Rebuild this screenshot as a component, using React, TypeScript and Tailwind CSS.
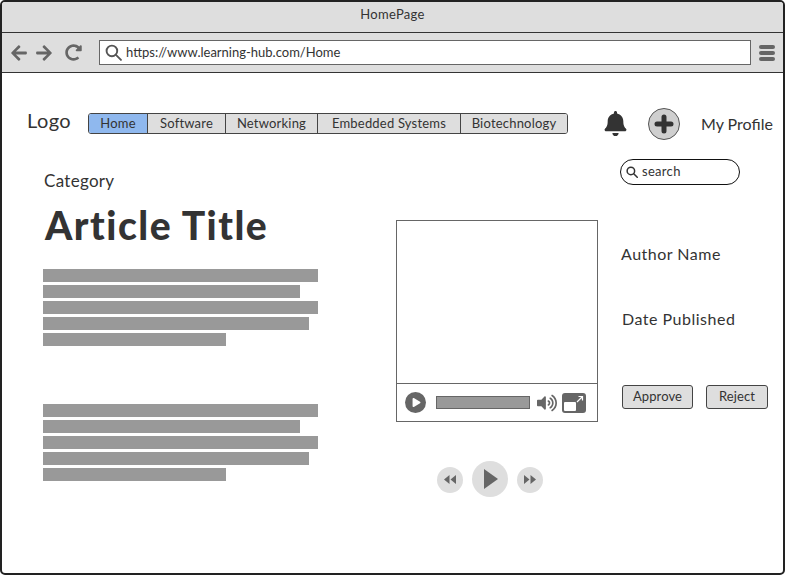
import React from 'react';
import { FaArrowLeft, FaArrowRight, FaBell, FaPlay, FaRedoAlt, FaVolumeUp } from 'react-icons/fa';

const tabs = [
  { label: 'Home', width: 'w-[58px]', active: true },
  { label: 'Software', width: 'w-[78px]', active: false },
  { label: 'Networking', width: 'w-[92px]', active: false },
  { label: 'Embedded Systems', width: 'w-[143px]', active: false },
  { label: 'Biotechnology', width: 'w-[107px]', active: false },
];

const TextBlock = () => (
  <div className="flex flex-col gap-[3px]">
    <div className="h-[13px] w-[275px] bg-[#999999]" />
    <div className="h-[13px] w-[257px] bg-[#999999]" />
    <div className="h-[13px] w-[275px] bg-[#999999]" />
    <div className="h-[13px] w-[266px] bg-[#999999]" />
    <div className="h-[13px] w-[183px] bg-[#999999]" />
  </div>
);

const SearchGlass = ({ size, width, color }: { size: number; width: number; color: string }) => (
  <svg width={size} height={size} viewBox="0 0 16 16" fill="none" stroke={color} strokeWidth={width} strokeLinecap="round">
    <circle cx="6.5" cy="6.5" r="5" />
    <path d="M10.3 10.3 15 15" />
  </svg>
);

export default function App() {
  return (
    <div className="w-[785px] h-[575px] bg-white border-2 border-[#222] rounded-[5px] overflow-hidden flex flex-col text-[#333] font-['Lato',sans-serif]">
      <div className="h-[31px] shrink-0 bg-[#dedede] border-b border-[#333] flex items-center justify-center pb-[5px] text-[13px] tracking-[0.3px]">HomePage</div>
      <div className="h-[40px] shrink-0 bg-[#dedede] border-b border-[#333] flex items-center pl-[8px]">
        <FaArrowLeft size={18} color="#666" />
        <FaArrowRight size={18} color="#666" className="ml-[7px]" />
        <FaRedoAlt size={17} color="#666" className="ml-[12px]" />
        <div className="ml-[17px] w-[652px] h-[25px] bg-white border border-[#666] flex items-center pl-[5px] text-[13px]">
          <SearchGlass size={17} width={1.8} color="#555" />
          <span className="ml-[4px] pt-[1px]">https://www.learning-hub.com/Home</span>
        </div>
        <div className="ml-[8px] w-[16px] flex flex-col gap-[2px]">
          <div className="h-[4px] rounded-full bg-[#666]" />
          <div className="h-[4px] rounded-full bg-[#666]" />
          <div className="h-[4px] rounded-full bg-[#666]" />
        </div>
      </div>

      <div className="mt-[34px] h-[32px] shrink-0 flex items-center pl-[25px]">
        <div className="w-[61px] pb-[6px] text-[20px] tracking-[0.4px]">Logo</div>
        <div className="w-[480px] h-[21px] flex border border-[#444] rounded-[3px] overflow-hidden text-[13px] tracking-[0.2px]">
          {tabs.map((t, i) => (
            <div key={t.label} className={`${t.width} shrink-0 pt-[1px] flex items-center justify-center ${i > 0 ? 'border-l border-[#444]' : ''} ${t.active ? 'bg-[#8fb8ee]' : 'bg-[#dedede]'}`}>{t.label}</div>
          ))}
        </div>
        <FaBell size={25} color="#333" className="ml-[35px] mt-[1px]" />
        <div className="ml-[20px] mt-[1px] w-[32px] h-[32px] rounded-full bg-[#cfcfcf] border border-[#555] flex items-center justify-center">
          <svg width="20" height="20" viewBox="0 0 20 20" stroke="#333" strokeWidth="5" strokeLinecap="round">
            <path d="M10 3v14M3 10h14" />
          </svg>
        </div>
        <div className="ml-[21px] pt-[1px] text-[16px] whitespace-nowrap">My Profile</div>
      </div>

      <div className="mt-[20px] flex pl-[41px]">
        <div className="w-[275px] flex flex-col">
          <div className="mt-[11px] h-[22px] flex items-center text-[17px] tracking-[0.3px] pl-[1px]">Category</div>
          <div className="mt-[10px] h-[46px] flex items-center text-[39px] font-black tracking-[1.5px] whitespace-nowrap pl-[2px]">Article Title</div>
          <div className="mt-[21px]"><TextBlock /></div>
          <div className="mt-[58px]"><TextBlock /></div>
        </div>

        <div className="ml-[78px] w-[202px] mt-[61px] flex flex-col">
          <div className="h-[202px] border border-[#666] flex flex-col">
            <div className="flex-1" />
            <div className="h-[38px] border-t border-[#666] flex items-center pl-[8px]">
              <div className="w-[21px] h-[21px] rounded-full bg-[#666] flex items-center justify-center">
                <FaPlay size={9} color="white" className="ml-[1px]" />
              </div>
              <div className="ml-[10px] w-[94px] h-[13px] bg-[#999] border border-[#666]" />
              <FaVolumeUp size={20} color="#666" className="ml-[7px]" />
              <svg width="24" height="20" viewBox="0 0 24 20" className="ml-[5px]">
                <rect width="24" height="20" rx="3" fill="#666" />
                <rect x="2" y="9" width="12" height="9" rx="1" fill="white" />
                <path d="M15 9l5-5M16.5 3.5H20.5V7.5" stroke="white" strokeWidth="1.2" fill="none" />
              </svg>
            </div>
          </div>
          <div className="mt-[39px] ml-[41px] flex items-center gap-[9px]">
            <div className="w-[26px] h-[26px] mt-[1px] rounded-full bg-[#dedede] flex items-center justify-center">
              <svg width="12" height="9" viewBox="0 0 12 9" fill="#666">
                <path d="M5.5 0v9L0 4.5zM12 0v9L6.5 4.5z" />
              </svg>
            </div>
            <div className="w-[36px] h-[36px] rounded-full bg-[#dedede] flex items-center justify-center">
              <svg width="14" height="20" viewBox="0 0 14 20" fill="#666" className="ml-[2px]">
                <path d="M0 0l14 10L0 20z" />
              </svg>
            </div>
            <div className="w-[26px] h-[26px] mt-[1px] rounded-full bg-[#dedede] flex items-center justify-center">
              <svg width="12" height="9" viewBox="0 0 12 9" fill="#666">
                <path d="M0 0v9l5.5-4.5zM6.5 0v9L12 4.5z" />
              </svg>
            </div>
          </div>
        </div>

        <div className="ml-[22px] w-[150px] flex flex-col">
          <div className="w-[120px] h-[26px] border border-[#111] rounded-full flex items-center pl-[5px] text-[13px] tracking-[0.3px]">
            <SearchGlass size={12} width={2} color="#333" />
            <span className="ml-[4px]">search</span>
          </div>
          <div className="mt-[57px] h-[24px] flex items-center pl-[1px] text-[16px] tracking-[0.5px]">Author Name</div>
          <div className="mt-[41px] h-[24px] flex items-center pl-[2px] text-[16px] tracking-[0.5px]">Date Published</div>
          <div className="mt-[54px] flex pl-[2px] gap-[13px] text-[13px] tracking-[0.1px]">
            <div className="w-[71px] h-[24px] bg-[#dedede] border border-[#444] rounded-[3px] flex items-center justify-center">Approve</div>
            <div className="w-[62px] h-[24px] bg-[#dedede] border border-[#444] rounded-[3px] flex items-center justify-center">Reject</div>
          </div>
        </div>
      </div>
    </div>
  );
}
